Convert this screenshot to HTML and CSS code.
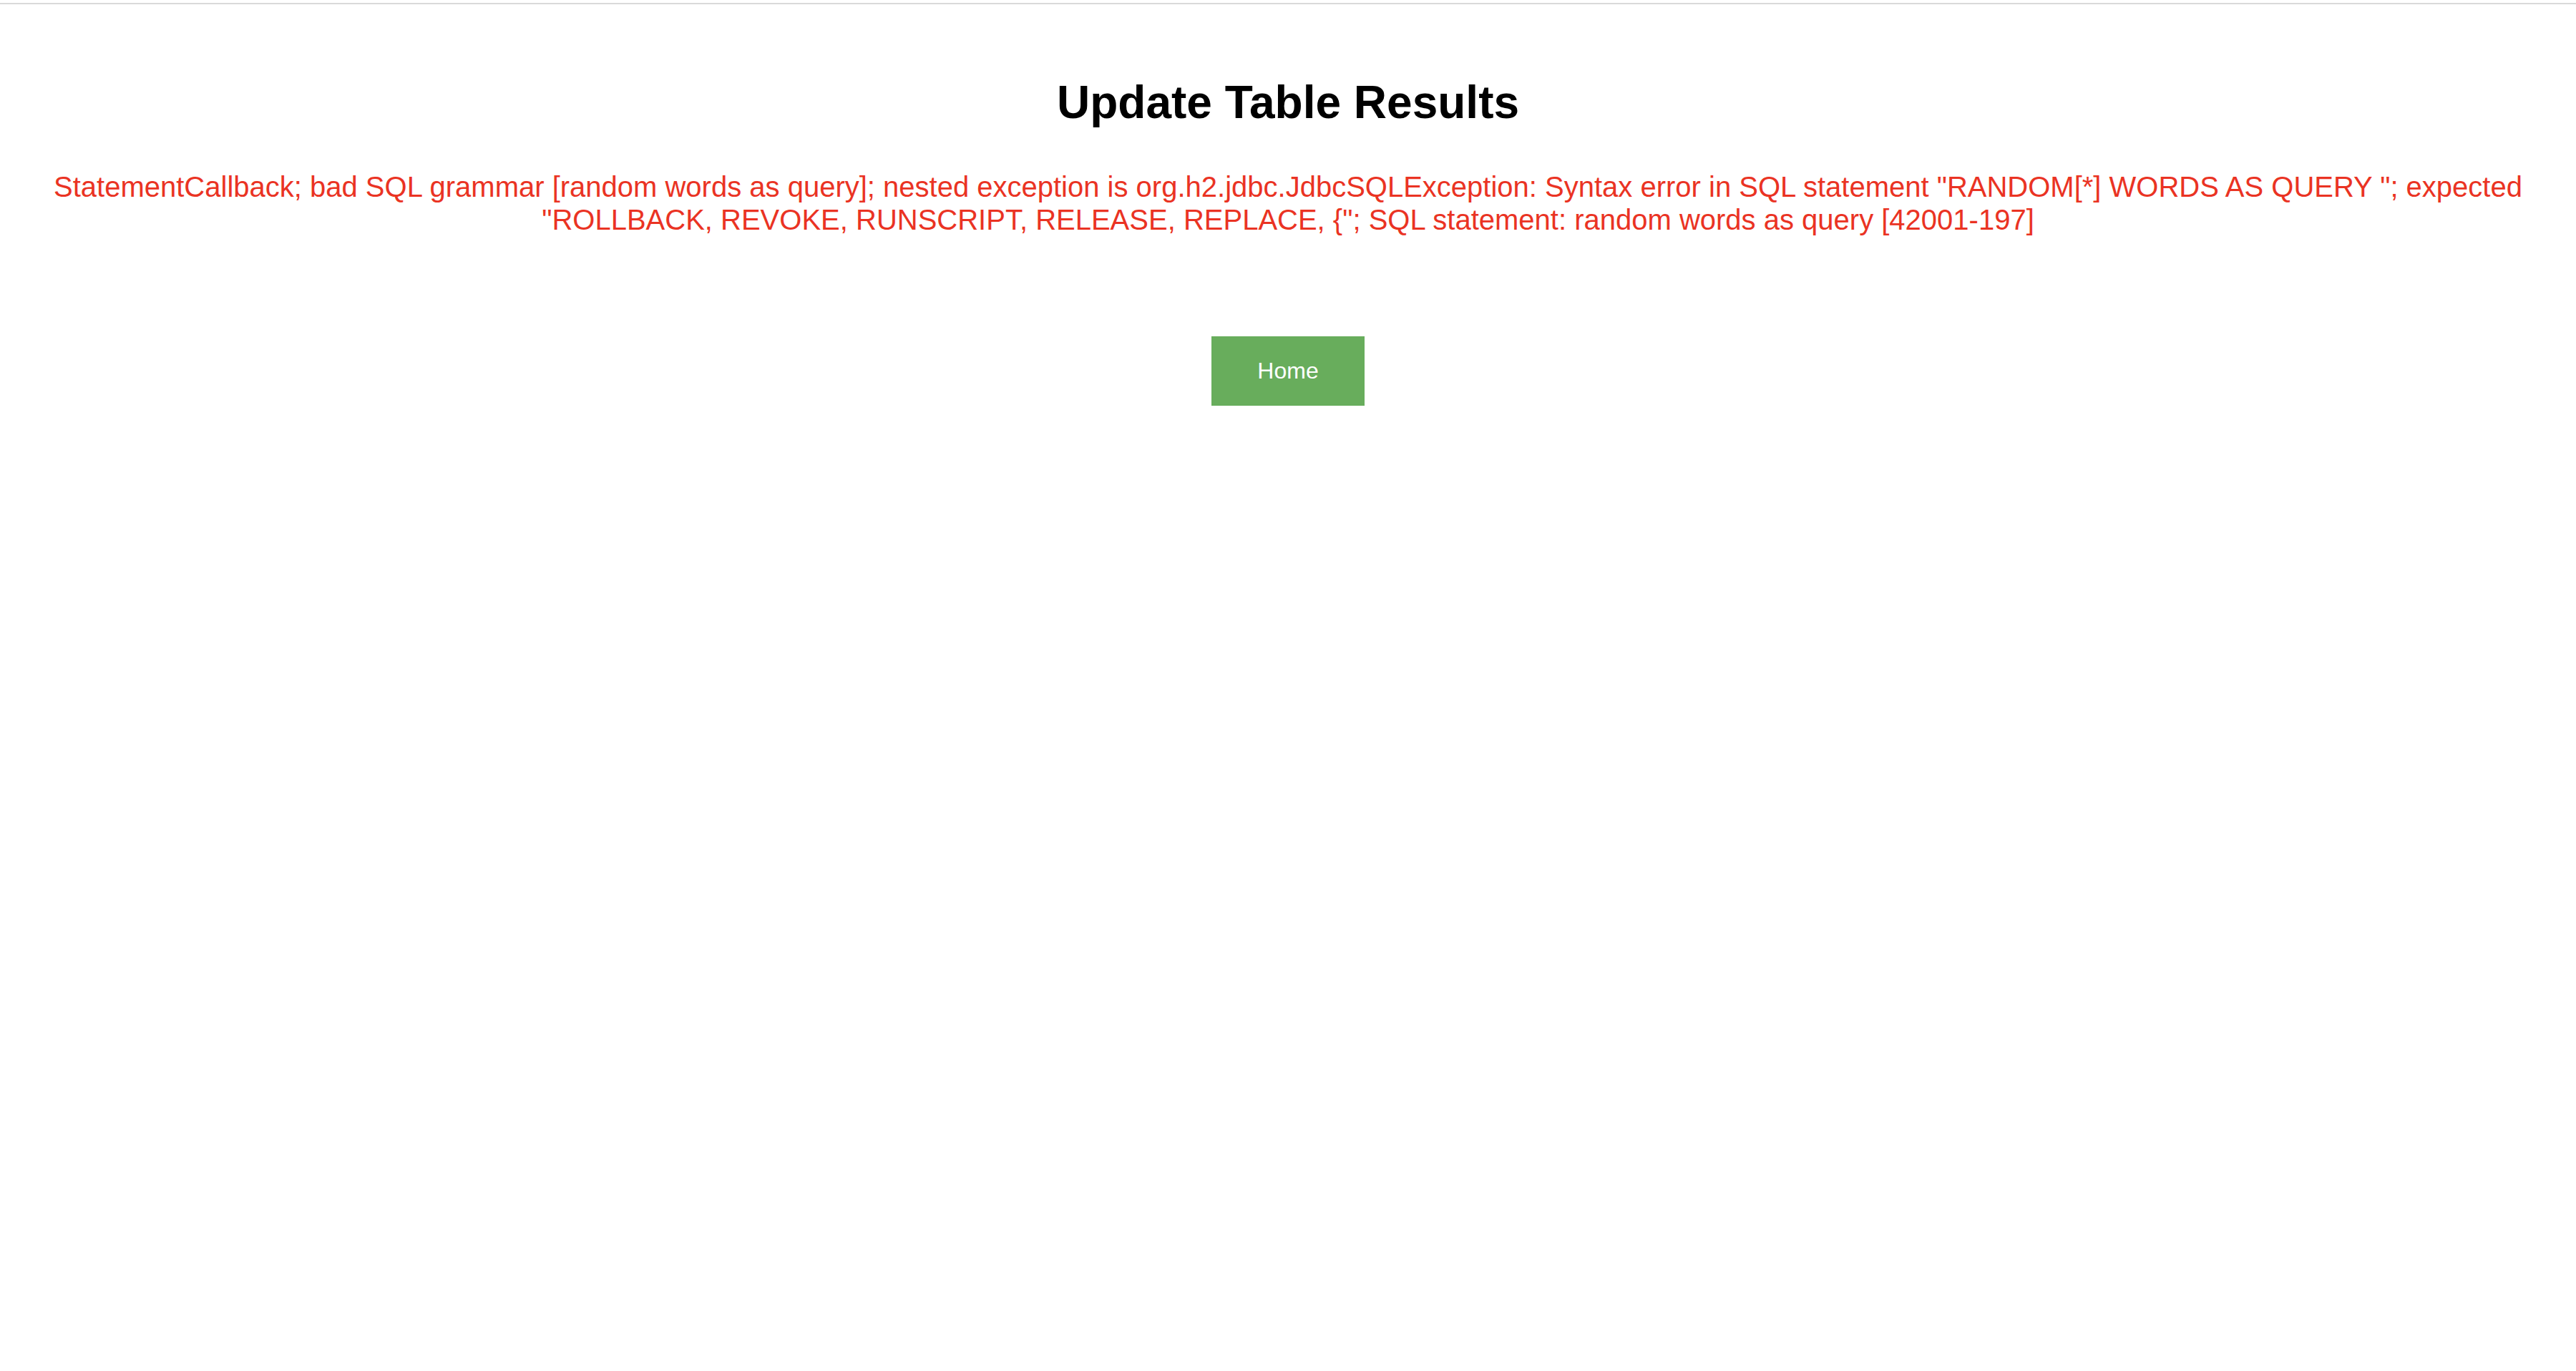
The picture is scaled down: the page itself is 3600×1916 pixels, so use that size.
FILE: index.html
```html
<!DOCTYPE html>
<html lang="en">
<head>
<meta charset="utf-8">
<title>Update Table Results</title>
<link rel="stylesheet" href="styles.css">
</head>
<body>
<div class="topbar"></div>
<main class="content">
  <h1 class="title">Update Table Results</h1>
  <p class="error">StatementCallback; bad SQL grammar [random words as query]; nested exception is org.h2.jdbc.JdbcSQLException: Syntax error in SQL statement "RANDOM[*] WORDS AS QUERY "; expected "ROLLBACK, REVOKE, RUNSCRIPT, RELEASE, REPLACE, {"; SQL statement: random words as query [42001-197]</p>
  <a class="button" href="#">Home</a>
</main>
</body>
</html>
```

FILE: styles.css
```css
html, body {
  margin: 0;
  padding: 0;
  background: #ffffff;
}

body {
  font-family: "Liberation Sans", Arial, Helvetica, sans-serif;
}

.topbar {
  margin-top: 4px;
  height: 2px;
  background: #d9d9d9;
}

.content {
  display: flex;
  flex-direction: column;
  align-items: center;
  padding: 0 16px;
  text-align: center;
}

.title {
  margin: 100px 0 58px;
  font-size: 64px;
  font-weight: bold;
  color: #000000;
  line-height: normal;
}

.error {
  margin: 0;
  font-size: 40px;
  line-height: 46px;
  color: #ea3323;
}

.button {
  margin-top: 140px;
  display: block;
  padding: 30px 64px;
  background: #68ad5c;
  color: #ffffff;
  font-size: 32px;
  text-decoration: none;
}
```
